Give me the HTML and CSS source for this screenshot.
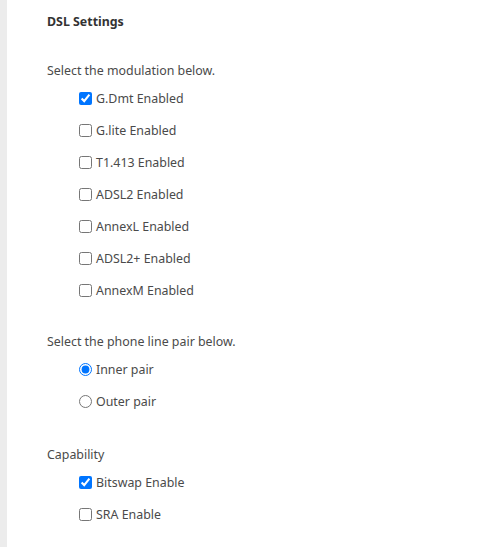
FILE: index.html
```html
<!DOCTYPE html>
<html>
<head>
<meta charset="utf-8">
<link rel="stylesheet" href="styles.css">
</head>
<body>
<div class="page">
  <div class="strip"></div>
  <div class="content">
    <div class="title">DSL Settings</div>

    <div class="section first">
      <div class="label">Select the modulation below.</div>
      <div class="options">
        <label class="opt"><input type="checkbox" checked><span>G.Dmt Enabled</span></label>
        <label class="opt"><input type="checkbox"><span>G.lite Enabled</span></label>
        <label class="opt"><input type="checkbox"><span>T1.413 Enabled</span></label>
        <label class="opt"><input type="checkbox"><span>ADSL2 Enabled</span></label>
        <label class="opt"><input type="checkbox"><span>AnnexL Enabled</span></label>
        <label class="opt"><input type="checkbox"><span>ADSL2+ Enabled</span></label>
        <label class="opt"><input type="checkbox"><span>AnnexM Enabled</span></label>
      </div>
    </div>

    <div class="section">
      <div class="label">Select the phone line pair below.</div>
      <div class="options">
        <label class="opt"><input type="radio" name="pair" checked><span>Inner pair</span></label>
        <label class="opt"><input type="radio" name="pair"><span>Outer pair</span></label>
      </div>
    </div>

    <div class="section last">
      <div class="label">Capability</div>
      <div class="options">
        <label class="opt"><input type="checkbox" checked><span>Bitswap Enable</span></label>
        <label class="opt"><input type="checkbox"><span>SRA Enable</span></label>
      </div>
    </div>
  </div>
</div>
</body>
</html>
```

FILE: styles.css
```css
html, body {
  margin: 0;
  padding: 0;
  background: #fff;
}
body {
  font-family: "Noto Sans", "Open Sans", sans-serif;
  font-size: 12.4px;
  color: #4a4a4a;
}
.page {
  display: flex;
  min-height: 547px;
}
.strip {
  width: 7px;
  background: #ececec;
  flex: none;
}
.content {
  padding-left: 40px;
  padding-top: 12px;
}
.title {
  font-weight: bold;
  line-height: 20px;
  height: 20px;
  color: #333;
}
.section {
  margin-top: 26px;
}
.section.first {
  margin-top: 29px;
}
.section.last {
  margin-top: 28px;
}
.label {
  line-height: 20px;
  height: 20px;
  margin-bottom: 1px;
}
.options {
  padding-left: 28px;
  display: flex;
  flex-direction: column;
}
.opt {
  display: flex;
  align-items: center;
  height: 32px;
}
.opt input {
  margin: 0 4px 0 4px;
  width: 13px;
  height: 13px;
}
```
